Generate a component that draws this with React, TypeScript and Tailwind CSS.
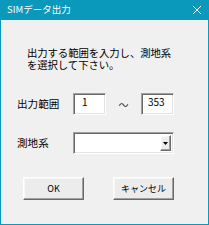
import React from "react";

const sunken =
  "border border-t-[#a0a0a0] border-l-[#a0a0a0] border-b-white border-r-white shadow-[inset_1px_1px_0_#696969,inset_-1px_-1px_0_#e3e3e3] bg-white";
const raised =
  "border border-t-white border-l-white border-b-[#696969] border-r-[#696969] shadow-[inset_-1px_-1px_0_#a0a0a0,inset_1px_1px_0_#f8f8f8] bg-[#ececec]";

export default function App() {
  return (
    <div
      className="w-[209px] h-[225px] flex flex-col bg-[#f0f0f0] border-x border-b border-[#0a98bb] text-black"
      style={{ fontFamily: '"Noto Sans CJK JP", "Noto Sans", sans-serif' }}
    >
      <div className="h-[20px] -mx-px bg-[#0a98bb] flex items-center justify-between pl-[7px] pr-[6px] text-white">
        <span className="text-[9.5px] leading-none">SIMデータ出力</span>
        <svg width="10" height="10" viewBox="0 0 10 10" className="mr-[1px]">
          <path d="M1 1L9 9M9 1L1 9" stroke="white" strokeWidth="1" />
        </svg>
      </div>

      <div className="mt-[27px] pl-[26px] text-[10.4px] leading-[11px] tracking-[-0.1px] flex flex-col gap-[1px]">
        <span>出力する範囲を入力し、測地系</span>
        <span>を選択して下さい。</span>
      </div>

      <div className="mt-[23px] flex items-center h-[22px] pl-[16px]">
        <span className="w-[56px] text-[10.6px]">出力範囲</span>
        <div className={`w-[33px] h-[22px] ${sunken} pl-[8px] pt-[2px] text-[10px] leading-[12px]`}>1</div>
        <span className="w-[35px] text-center text-[10px] text-[#333]">～</span>
        <div className={`w-[33px] h-[22px] ${sunken} pl-[6px] pt-[2px] text-[10px] leading-[12px]`}>353</div>
      </div>

      <div className="mt-[17px] flex items-center h-[22px] pl-[16px]">
        <span className="w-[56px] text-[10.6px]">測地系</span>
        <div className={`w-[101px] h-[22px] ${sunken} flex justify-end p-[2px]`}>
          <div className={`w-[11px] h-full ${raised} flex items-center justify-center`}>
            <svg width="5" height="3" viewBox="0 0 5 3">
              <path d="M0 0H5L2.5 3Z" fill="black" />
            </svg>
          </div>
        </div>
      </div>

      <div className="mt-[23px] flex pl-[22px] gap-[29px]">
        <button className={`w-[61px] h-[23px] ${raised} text-[9px]`}>OK</button>
        <button className={`w-[61px] h-[23px] ${raised} text-[9px]`}>キャンセル</button>
      </div>
    </div>
  );
}
